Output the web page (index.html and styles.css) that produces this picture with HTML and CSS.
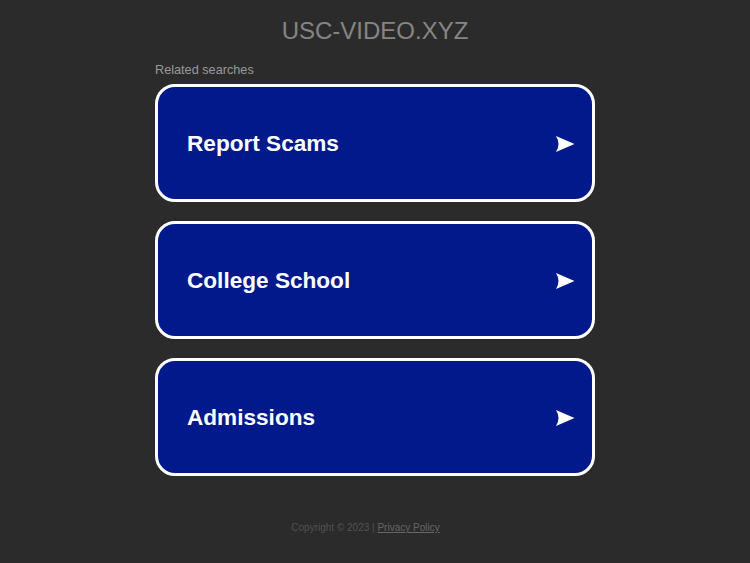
FILE: index.html
```html
<!DOCTYPE html>
<html>
<head>
<meta charset="utf-8">
<title>usc-video.xyz</title>
<link rel="stylesheet" href="styles.css">
</head>
<body>
<div class="page">
  <h1 class="title">USC-VIDEO.XYZ</h1>
  <div class="content">
    <div class="label">Related searches</div>
    <ul class="links">
      <li><a class="link" href="#"><span class="link-text">Report Scams</span><svg class="arrow" viewBox="0 0 20 18" width="20" height="18"><path d="M1 1 L19.5 9 L1 17 Q6 9 1 1 Z" fill="#fff"/></svg></a></li>
      <li><a class="link" href="#"><span class="link-text">College School</span><svg class="arrow" viewBox="0 0 20 18" width="20" height="18"><path d="M1 1 L19.5 9 L1 17 Q6 9 1 1 Z" fill="#fff"/></svg></a></li>
      <li><a class="link" href="#"><span class="link-text">Admissions</span><svg class="arrow" viewBox="0 0 20 18" width="20" height="18"><path d="M1 1 L19.5 9 L1 17 Q6 9 1 1 Z" fill="#fff"/></svg></a></li>
    </ul>
  </div>
  <footer class="footer">Copyright © 2023 | <a class="footer-link" href="#">Privacy Policy</a></footer>
</div>
</body>
</html>
```

FILE: styles.css
```css
html, body {
  margin: 0;
  padding: 0;
  background: #2b2b2b;
  font-family: "Liberation Sans", Arial, sans-serif;
}
.page {
  display: flex;
  flex-direction: column;
  align-items: center;
  padding-top: 17px;
}
.title {
  margin: 0;
  font-size: 24px;
  line-height: 28px;
  font-weight: normal;
  color: #858585;
}
.content {
  width: 440px;
  margin-top: 18px;
}
.label {
  font-size: 12.7px;
  line-height: 15px;
  color: #9a9a9a;
  margin-bottom: 6px;
}
.links {
  list-style: none;
  margin: 0;
  padding: 0;
  display: flex;
  flex-direction: column;
  gap: 19px;
}
.link {
  box-sizing: border-box;
  height: 118px;
  display: flex;
  align-items: center;
  justify-content: space-between;
  padding: 1px 17px 0 29px;
  background: #02198b;
  border: 3px solid #ffffff;
  border-radius: 20px;
  text-decoration: none;
  color: #ffffff;
}
.link-text {
  font-size: 22.6px;
  font-weight: bold;
  line-height: 26px;
}
.arrow {
  display: block;
}
.footer {
  margin-top: 46px;
  padding-right: 19px;
  font-size: 10px;
  line-height: 12px;
  color: #525252;
}
.footer-link {
  color: #666666;
  text-decoration: underline;
}
```
